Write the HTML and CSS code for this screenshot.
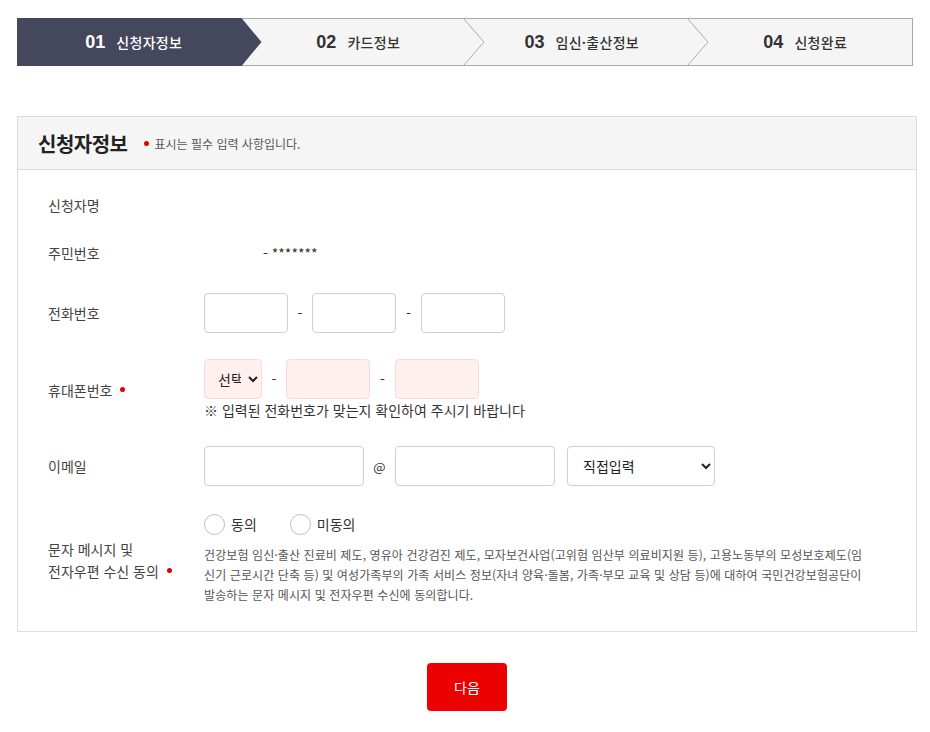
FILE: index.html
```html
<!DOCTYPE html>
<html lang="ko">
<head>
<meta charset="utf-8">
<title>신청자정보</title>
<link rel="stylesheet" href="styles.css">
</head>
<body>
<div class="wrap">
  <ol class="stepper">
    <li class="step active"><span class="num">01</span><span class="lbl">신청자정보</span></li>
    <li class="step"><span class="num">02</span><span class="lbl">카드정보</span>
      <svg class="chev" viewBox="0 0 21 47" preserveAspectRatio="none"><polyline points="0,0 20,23.5 0,47" fill="none" stroke="#a9a9a9" stroke-width="1"/></svg></li>
    <li class="step"><span class="num">03</span><span class="lbl">임신·출산정보</span>
      <svg class="chev" viewBox="0 0 21 47" preserveAspectRatio="none"><polyline points="0,0 20,23.5 0,47" fill="none" stroke="#a9a9a9" stroke-width="1"/></svg></li>
    <li class="step"><span class="num">04</span><span class="lbl">신청완료</span></li>
  </ol>

  <section class="panel">
    <header class="panel-head">
      <h2 class="panel-title">신청자정보</h2>
      <span class="dot"></span>
      <span class="req-note">표시는 필수 입력 사항입니다.</span>
    </header>
    <div class="panel-body">
      <div class="row r-plain">
        <div class="label">신청자명</div>
        <div class="field"></div>
      </div>
      <div class="row r-plain">
        <div class="label">주민번호</div>
        <div class="field"><span class="rrn-front"></span>- *******</div>
      </div>
      <div class="row r-tel">
        <div class="label">전화번호</div>
        <div class="field">
          <div class="inline">
            <input class="inp sm" type="text">
            <span class="sep">-</span>
            <input class="inp sm" type="text">
            <span class="sep">-</span>
            <input class="inp sm" type="text">
          </div>
        </div>
      </div>
      <div class="row r-mobile">
        <div class="label">휴대폰번호<span class="dot lbl-dot"></span></div>
        <div class="field">
          <div class="inline">
            <select class="sel pink"><option>선택</option></select>
            <span class="sep">-</span>
            <input class="inp sm pink" type="text">
            <span class="sep">-</span>
            <input class="inp sm pink" type="text">
          </div>
          <p class="tel-note">※ 입력된 전화번호가 맞는지 확인하여 주시기 바랍니다</p>
        </div>
      </div>
      <div class="row r-mail">
        <div class="label">이메일</div>
        <div class="field">
          <div class="inline">
            <input class="inp md" type="text">
            <span class="at">@</span>
            <input class="inp md" type="text">
            <select class="sel mail"><option>직접입력</option></select>
          </div>
        </div>
      </div>
      <div class="row r-consent">
        <div class="label two">문자 메시지 및<br>전자우편 수신 동의<span class="dot lbl-dot"></span></div>
        <div class="field">
          <div class="radios">
            <label class="radio"><input type="radio" name="agree"><span>동의</span></label>
            <label class="radio"><input type="radio" name="agree"><span>미동의</span></label>
          </div>
          <p class="consent-text">건강보험 임신·출산 진료비 제도, 영유아 건강검진 제도, 모자보건사업(고위험 임산부 의료비지원 등), 고용노동부의 모성보호제도(임신기 근로시간 단축 등) 및 여성가족부의 가족 서비스 정보(자녀 양육·돌봄, 가족·부모 교육 및 상담 등)에 대하여 국민건강보험공단이 발송하는 문자 메시지 및 전자우편 수신에 동의합니다.</p>
        </div>
      </div>
    </div>
  </section>

  <div class="actions">
    <button class="btn-next" type="button">다음</button>
  </div>
</div>
</body>
</html>
```

FILE: styles.css
```css
* { box-sizing: border-box; }
html, body { margin: 0; padding: 0; background: #fff; }
body {
  font-family: "Noto Sans CJK KR", "Noto Sans", "Liberation Sans", sans-serif;
  color: #333;
  font-size: 14px;
}
.wrap {
  width: 900px;
  margin-left: 17px;
  padding-top: 18px;
}

/* stepper */
.stepper {
  list-style: none;
  margin: 0;
  padding: 0;
  width: 896px;
  height: 48px;
  display: flex;
  background: #f5f5f5;
  border: 1px solid #a9a9a9;
}
.step {
  position: relative;
  flex: 1 1 0;
  display: flex;
  align-items: center;
  justify-content: center;
  gap: 11px;
  padding-left: 10px;
  color: #333;
}
.step .num {
  font-family: "Liberation Sans", Arial, sans-serif;
  font-weight: 700;
  font-size: 18px;
  color: #333;
}
.step .lbl {
  font-size: 14px;
  font-weight: 500;
  letter-spacing: 0.3px;
}
.step.active {
  background: #45475c;
  margin: -1px 0 -1px -1px;
  color: #fff;
  padding-right: 1px;
}
.step.active .num { color: #fff; }
.step.active::after {
  content: "";
  position: absolute;
  left: 100%;
  top: 0;
  bottom: 0;
  width: 20px;
  background: #45475c;
  clip-path: polygon(0 0, 100% 50%, 0 100%);
  z-index: 2;
}
.chev {
  position: absolute;
  right: -20px;
  top: 0;
  width: 21px;
  height: 100%;
  z-index: 2;
}

/* panel */
.panel {
  margin-top: 50px;
  border: 1px solid #dcdcdc;
}
.panel-head {
  height: 53px;
  background: #f5f5f5;
  border-bottom: 1px solid #dcdcdc;
  display: flex;
  align-items: center;
  padding-left: 20px;
}
.panel-title {
  margin: 0 16px 0 0;
  font-size: 20px;
  font-weight: 700;
  color: #222;
  letter-spacing: -0.5px;
}
.dot {
  display: inline-block;
  width: 5px;
  height: 5px;
  border-radius: 50%;
  background: #e00000;
}
.req-note {
  margin-left: 6px;
  font-size: 12px;
  color: #555;
}
.panel-body {
  padding: 11px 0 0 30px;
}
.row {
  display: grid;
  grid-template-columns: 156px 1fr;
  align-items: center;
}
.label {
  font-size: 14px;
  color: #444;
}
.lbl-dot { margin-left: 8px; vertical-align: middle; position: relative; top: -2px; }
.label.two { line-height: 22px; }
.field { color: #333; }
.r-plain { height: 48px; }
.r-tel { padding: 16px 0 13px; }
.r-mobile { padding: 13px 0 12px; }
.r-mail { padding: 14px 0 14px; }
.r-consent { padding: 14px 0 26px; }

.rrn-front { display: inline-block; width: 59px; }

.inline {
  display: flex;
  align-items: center;
}
.inp {
  height: 40px;
  border: 1px solid #cfcfcf;
  border-radius: 4px;
  background: #fff;
  padding: 0 10px;
  font: inherit;
  outline: none;
}
.inp.sm { width: 84px; }
.inp.md { width: 160px; }
.pink {
  background: #fff0f0;
  border-color: #f5dcdc;
}
.sep {
  width: 24px;
  text-align: center;
  color: #333;
}
.sep + .inp.sm + .sep { width: 25px; }
.at {
  width: 31px;
  text-align: center;
  color: #333;
  font-size: 13px;
}
.sel {
  height: 40px;
  border: 1px solid #cfcfcf;
  border-radius: 4px;
  background: #fff;
  font: inherit;
  font-size: 14px;
  color: #222;
}
.sel.pink {
  width: 58px;
  padding: 0 4px 0 9px;
  background: #fff0f0;
  border-color: #f5dcdc;
}
.sel.mail {
  width: 148px;
  margin-left: 12px;
  padding: 0 8px 0 11px;
}
.tel-note {
  margin: 1px 0 0;
  font-size: 14px;
  line-height: 20px;
  color: #333;
}

.radios {
  display: flex;
  gap: 33px;
  height: 20px;
  align-items: center;
}
.radio {
  display: flex;
  align-items: center;
  gap: 6px;
  font-size: 14px;
  color: #333;
}
.radio input {
  appearance: none;
  -webkit-appearance: none;
  margin: 0;
  width: 21px;
  height: 21px;
  border: 1px solid #bdbdbd;
  border-radius: 50%;
  background: #fff;
}
.consent-text {
  margin: 11px 0 0;
  width: 668px;
  font-size: 12px;
  line-height: 20px;
  color: #555;
  letter-spacing: 0.1px;
  word-break: break-all;
}

.actions {
  display: flex;
  justify-content: center;
  padding-top: 31px;
}
.btn-next {
  width: 80px;
  height: 48px;
  border: 0;
  border-radius: 4px;
  background: #ec0000;
  color: #fff;
  font: inherit;
  font-size: 14px;
}
```
